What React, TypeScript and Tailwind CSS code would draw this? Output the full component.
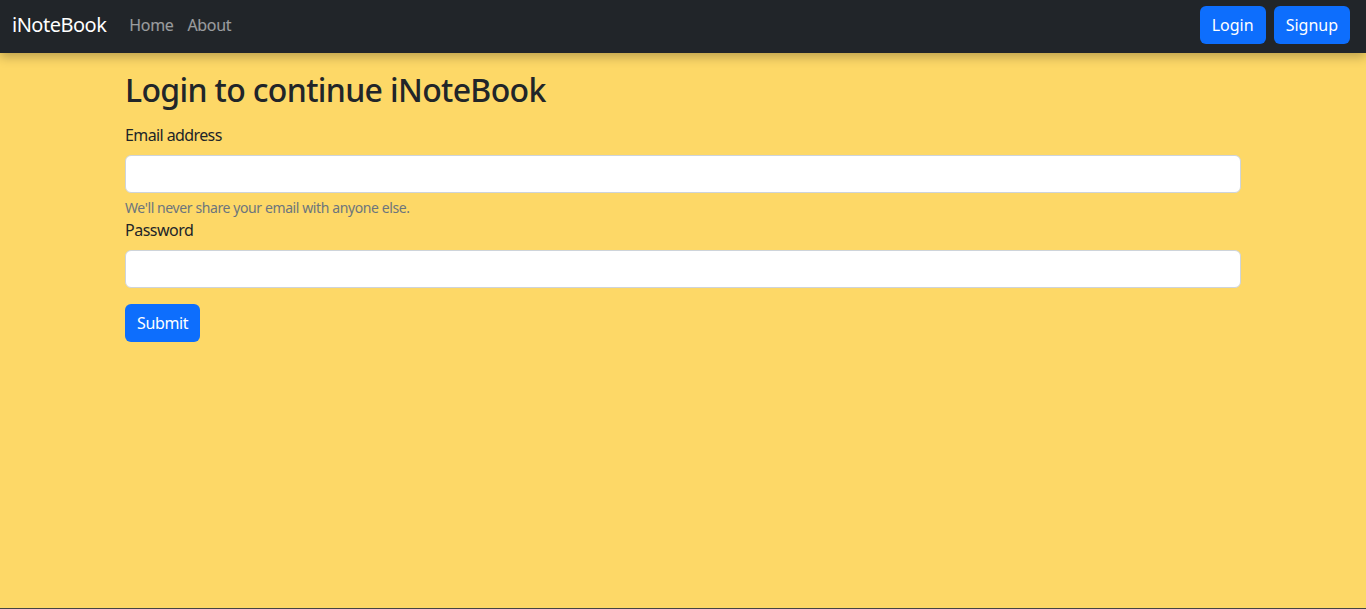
import { useState } from 'react'

const font = { fontFamily: '"Noto Sans", "Open Sans", Arial, sans-serif' }

export default function App() {
  const [email, setEmail] = useState('')
  const [password, setPassword] = useState('')

  return (
    <div className="min-h-[609px] bg-[#fdd867] flex flex-col border-b border-[#444] tracking-[-0.35px]" style={font}>
      {/* Navbar */}
      <nav className="h-[53px] bg-[#212529] flex items-center justify-between px-3 pb-[3px] shadow-[0_4px_10px_rgba(0,0,0,0.25)] relative z-10">
        <div className="flex items-center">
          <a href="#" className="text-white text-[20px] mr-[15px] tracking-[-0.5px]">iNoteBook</a>
          <a href="#" className="text-white/55 text-[16px] px-2">Home</a>
          <a href="#" className="text-white/55 text-[16px] pl-[6px] pr-2">About</a>
        </div>
        <div className="flex items-center gap-2 pr-1">
          <button className="bg-[#0d6efd] text-white text-[16px] h-[38px] px-3 rounded-[6px] tracking-normal">Login</button>
          <button className="bg-[#0d6efd] text-white text-[16px] h-[38px] px-3 rounded-[6px] tracking-normal">Signup</button>
        </div>
      </nav>

      {/* Content */}
      <div className="w-[1116px] mx-auto pt-[18px] text-[#212529]">
        <h2 className="text-[32px] font-medium leading-[1.2] mb-[14px] tracking-[-0.65px]">Login to continue iNoteBook</h2>
        <form onSubmit={(e) => e.preventDefault()}>
          <div>
            <label className="block text-[16px] leading-[24px] mb-2 tracking-[-0.6px]">Email address</label>
            <input
              type="email"
              value={email}
              onChange={(e) => setEmail(e.target.value)}
              className="w-full h-[38px] bg-white border border-[#ced4da] rounded-[6px] px-3 outline-none"
            />
            <div className="text-[14px] leading-[21px] mt-1 text-[#6c757d] tracking-[-0.4px]">We'll never share your email with anyone else.</div>
          </div>
          <div className="mb-4">
            <label className="block text-[16px] leading-[24px] mb-2 tracking-[-0.5px]">Password</label>
            <input
              type="password"
              value={password}
              onChange={(e) => setPassword(e.target.value)}
              className="w-full h-[38px] bg-white border border-[#ced4da] rounded-[6px] px-3 outline-none"
            />
          </div>
          <button type="submit" className="bg-[#0d6efd] text-white text-[16px] h-[38px] px-3 rounded-[6px]">Submit</button>
        </form>
      </div>
    </div>
  )
}
